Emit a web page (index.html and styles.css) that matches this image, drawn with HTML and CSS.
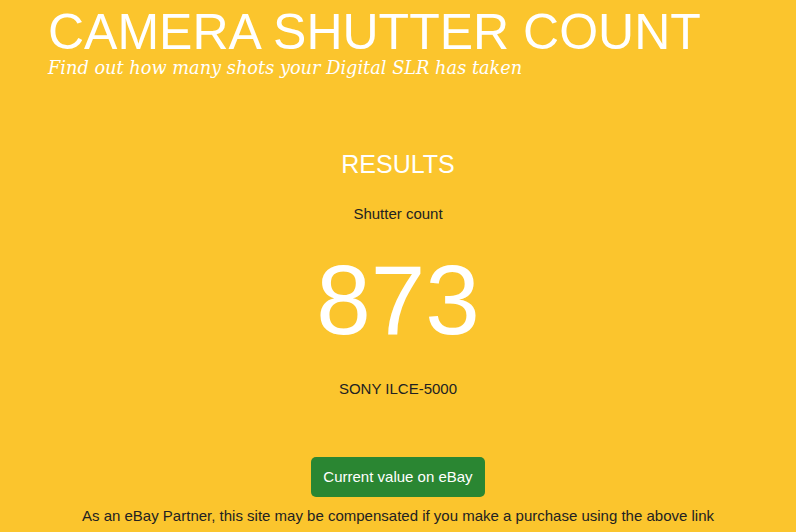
FILE: index.html
```html
<!DOCTYPE html>
<html lang="en">
<head>
    <meta charset="UTF-8">
    <meta name="viewport" content="width=device-width, initial-scale=1.0">
    <title>Camera Shutter Count</title>
    <link rel="stylesheet" href="styles.css">
</head>
<body>
    <header class="site-header">
        <h1>CAMERA SHUTTER COUNT</h1>
        <p class="tagline">Find out how many shots your Digital SLR has taken</p>
    </header>

    <main class="results">
        <h2>RESULTS</h2>
        <p class="label">Shutter count</p>
        <div class="count">873</div>
        <p class="model">SONY ILCE-5000</p>
        <a class="ebay-button" href="#">Current value on eBay</a>
        <p class="disclaimer">As an eBay Partner, this site may be compensated if you make a purchase using the above link</p>
    </main>
</body>
</html>
```

FILE: styles.css
```css
body {
    font-family: 'Liberation Sans', Arial, sans-serif;
    background-color: #fbc52d;
    color: #222;
    margin: 0;
    padding: 0;
}

.site-header {
    padding: 6px 48px 0;
    color: white;
}

.site-header h1 {
    margin: 0;
    font-size: 50px;
    font-weight: normal;
    line-height: 52px;
}

.tagline {
    margin: 0;
    font-family: 'DejaVu Serif', Georgia, serif;
    font-style: italic;
    font-size: 17.75px;
    line-height: 21px;
}

.results {
    text-align: center;
    padding-top: 70px;
}

.results h2 {
    margin: 0;
    color: white;
    font-size: 25px;
    font-weight: normal;
    line-height: 30px;
}

.label {
    margin: 26px 0 0;
    font-size: 15px;
}

.count {
    margin-top: 23px;
    color: white;
    font-size: 98px;
    line-height: 110px;
}

.model {
    margin: 25px 0 0;
    font-size: 15px;
}

.ebay-button {
    display: inline-block;
    margin-top: 60px;
    padding: 11px 12px 12px;
    background-color: #2a8632;
    color: white;
    font-size: 15px;
    text-decoration: none;
    border-radius: 5px;
}

.disclaimer {
    margin: 10px 0 0;
    font-size: 15px;
}
```
